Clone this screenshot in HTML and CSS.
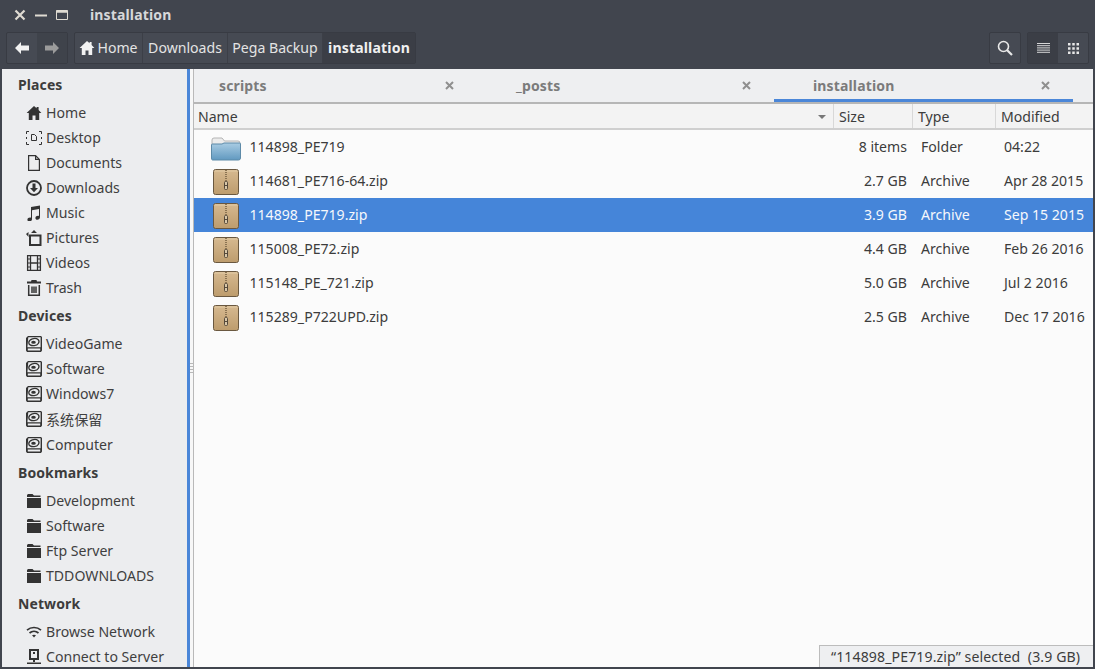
FILE: index.html
```html
<!DOCTYPE html>
<html lang="en">
<head>
<meta charset="utf-8">
<title>installation</title>
<link rel="stylesheet" href="styles.css">
</head>
<body>
<svg class="sprite" width="0" height="0" aria-hidden="true">
  <symbol id="i-home" viewBox="0 0 16 16"><path fill="currentColor" d="M8 1 .6 8h2.200v7h3.700v-4.600h3V15h3.700V8h2.200L12.600 5V2h-2v1.200z"/></symbol>
  <symbol id="i-desktop" viewBox="0 0 16 16"><path fill="none" stroke="currentColor" d="M.5 4V1.500H3M13 1.500h2.500V4M15.500 12v2.500H13M3 14.500H.5V12M.5 7v2M15.500 7v2"/><path fill="none" stroke="currentColor" d="M5.500 4.500h3l2 2v4h-5z"/></symbol>
  <symbol id="i-doc" viewBox="0 0 16 16"><path fill="none" stroke="currentColor" stroke-width="1.200" d="M2.600.6h7l3.800 3.800v11H2.600zM9.600.6v3.800h3.800"/></symbol>
  <symbol id="i-down" viewBox="0 0 16 16"><circle cx="8" cy="8" r="7" fill="none" stroke="currentColor" stroke-width="1.800"/><path fill="currentColor" d="M6.500 3.500h3V8h2.500L8 12.300 4 8h2.500z"/></symbol>
  <symbol id="i-music" viewBox="0 0 16 16"><path fill="currentColor" d="M14 .5v11.800c0 1.500-1.300 2.400-2.600 2.400s-2-.8-2-1.800c0-1.300 1.300-2.200 2.600-2.200.4 0 .7.100 1 .2V4L6 5.200v9c0 1.400-1.300 2.300-2.600 2.300s-2-.8-2-1.800c0-1.300 1.300-2.200 2.600-2.200.4 0 .7.100 1 .2V2z"/></symbol>
  <symbol id="i-pic" viewBox="0 0 16 16"><path fill="none" stroke="currentColor" stroke-width="2" d="M4 5.500h10.500v9.500H4z"/><path fill="currentColor" d="M8 0l3 3H5zM0 4l2.500-2v5z"/></symbol>
  <symbol id="i-film" viewBox="0 0 16 16"><path fill="none" stroke="currentColor" stroke-width="1.300" d="M1.600.7h12.800v14.600H1.600zM4.500.7v14.600M11.500.7v14.600M4.500 8h7"/><path stroke="currentColor" d="M1.600 4h2.900M1.600 8h2.900M1.600 12h2.900M11.500 4h2.900M11.500 8h2.900M11.500 12h2.900"/></symbol>
  <symbol id="i-trash" viewBox="0 0 16 16"><path fill="currentColor" d="M5.500 0h5l.5 1.500h4V3.500H1V1.500h4z"/><path fill="none" stroke="currentColor" stroke-width="1.500" d="M2.700 5v10.200h10.600V5M6 6.500v6.500M8 6.500v6.500M10 6.500v6.500"/></symbol>
  <symbol id="i-disk" viewBox="0 0 16 16"><path fill="currentColor" fill-rule="evenodd" d="M2 0h13l1 1v13.500l-1 1.500H1l-1-1.500V2zM2.300 1.300 1.400 11.200H14.600V1.300zM1.800 12.600v1.900h12.400v-1.900z"/><path fill="none" stroke="currentColor" stroke-width="1.300" d="M2.800 6.500C3 3.500 9 1 12 3.600c2.200 2 .4 5.800-3.800 6-3.600.2-5.600-1.200-5.400-3.100z"/><ellipse cx="7.500" cy="6.300" rx="2.300" ry="1.500" fill="currentColor"/></symbol>
  <symbol id="i-folder" viewBox="0 0 16 16"><path fill="currentColor" d="M2 1h4.500L8 2.500h6.500V4H1V2zM1 5h14v10H1z"/></symbol>
  <symbol id="i-wifi" viewBox="0 0 16 16"><path fill="none" stroke="currentColor" stroke-width="1.700" d="M1 6.200c4-3.600 10-3.600 14 0M3.500 9c2.600-2.200 6.400-2.200 9 0"/><path fill="currentColor" d="M6 11.300c1.200-.9 2.800-.9 4 0L8 13.500z"/></symbol>
  <symbol id="i-server" viewBox="0 0 16 16"><path fill="currentColor" fill-rule="evenodd" d="M3 0h10v11H3zM5 2v7h6V2zM7 3h2v2H7zM7 11h2v2H7zM1 13.500h14V15H1z"/></symbol>
  <symbol id="i-zip" viewBox="0 0 26 26"><rect x=".5" y=".5" width="25" height="25" rx="2" fill="url(#zipgrad)" stroke="#6a5840"/><path stroke="#f0dfc0" stroke-opacity=".5" fill="none" d="M1.500 2h23"/><path stroke="#8a7352" stroke-width="2" stroke-dasharray="1 1" d="M13 1v12"/><rect x="11.500" y="12.500" width="3" height="8" rx="1" fill="#d8c7a8" stroke="#54483a"/><path stroke="#54483a" d="M11.500 16.500h3"/></symbol>
  <symbol id="i-bigfolder" viewBox="0 0 30 26"><g transform="translate(0 2)"><path fill="#ececec" stroke="#b4b4b4" d="M1 20V3q0-2 2-2h8l2.500 3H27q2 0 2 2v14z"/><path fill="url(#foldgrad)" stroke="#5d8aa8" d="M.5 21V8q0-1 1-1H11l2-1h15.500q1 0 1 1v14q0 2-2 2h-26q-1 0-1-2z"/></g></symbol>
  <defs>
    <linearGradient id="zipgrad" x1="0" y1="0" x2="0" y2="1"><stop offset="0" stop-color="#d6b990"/><stop offset="1" stop-color="#bd9c6d"/></linearGradient>
    <linearGradient id="foldgrad" x1="0" y1="0" x2="0" y2="1"><stop offset="0" stop-color="#a9cce3"/><stop offset="1" stop-color="#6199c0"/></linearGradient>
  </defs>
</svg>

<div class="window">
  <header class="titlebar">
    <div class="wm-buttons">
      <svg class="wm" viewBox="0 0 12 12"><path d="M1.500 1.500l9 9M10.500 1.500l-9 9" stroke="currentColor" stroke-width="2.200" fill="none"/></svg>
      <svg class="wm" viewBox="0 0 12 12"><path d="M0 6.500h12" stroke="currentColor" stroke-width="2" fill="none"/></svg>
      <svg class="wm" viewBox="0 0 12 12"><path d="M.5 1.500h11v9H.5z" stroke="currentColor" fill="none"/><path d="M.5 2.500h11" stroke="currentColor" stroke-width="2.500" fill="none"/></svg>
    </div>
    <span class="title">installation</span>
  </header>

  <div class="toolbar">
    <div class="group nav">
      <button class="tbtn nav-back"><svg class="arrow" viewBox="0 0 14 12"><path fill="currentColor" d="M0 6l6-6v3.500h8v5H6V12z"/></svg></button>
      <button class="tbtn nav-fwd"><svg class="arrow" viewBox="0 0 14 12"><path fill="currentColor" d="M14 6L8 0v3.500H0v5h8V12z"/></svg></button>
    </div>
    <div class="group crumbs">
      <span class="crumb crumb-home"><svg class="crumb-icon"><use href="#i-home"/></svg>Home</span>
      <span class="crumb crumb-dl">Downloads</span>
      <span class="crumb crumb-pega">Pega Backup</span>
      <span class="crumb crumb-current">installation</span>
    </div>
    <div class="spacer"></div>
    <div class="group search">
      <button class="tbtn"><svg class="tool-search" viewBox="0 0 16 16"><circle cx="6.500" cy="6.500" r="5" fill="none" stroke="currentColor" stroke-width="1.600"/><path d="M10 10l5 5" stroke="currentColor" stroke-width="2.200"/></svg></button>
    </div>
    <div class="group views">
      <button class="tbtn view-on"><svg class="tool-list" viewBox="0 0 13 11"><path d="M0 .5h13M0 2.700h13M0 4.900h13M0 7.100h13M0 9.300h13" stroke="currentColor" stroke-width=".9" fill="none"/></svg></button>
      <button class="tbtn"><svg class="tool-grid" viewBox="0 0 11 11"><path fill="currentColor" d="M0 0h2.500v2.500H0zM4.250 0h2.500v2.500h-2.500zM8.500 0H11v2.500H8.500zM0 4.250h2.500v2.500H0zM4.250 4.250h2.500v2.500h-2.500zM8.500 4.250H11v2.500H8.500zM0 8.500h2.500V11H0zM4.250 8.500h2.500V11h-2.500zM8.500 8.500H11V11H8.500z"/></svg></button>
    </div>
  </div>

  <div class="body">
    <nav class="sidebar">
      <h2 class="side-head">Places</h2>
      <a class="side-item"><svg class="side-icon"><use href="#i-home"/></svg>Home</a>
      <a class="side-item"><svg class="side-icon"><use href="#i-desktop"/></svg>Desktop</a>
      <a class="side-item"><svg class="side-icon"><use href="#i-doc"/></svg>Documents</a>
      <a class="side-item"><svg class="side-icon"><use href="#i-down"/></svg>Downloads</a>
      <a class="side-item"><svg class="side-icon"><use href="#i-music"/></svg>Music</a>
      <a class="side-item"><svg class="side-icon"><use href="#i-pic"/></svg>Pictures</a>
      <a class="side-item"><svg class="side-icon"><use href="#i-film"/></svg>Videos</a>
      <a class="side-item"><svg class="side-icon"><use href="#i-trash"/></svg>Trash</a>
      <h2 class="side-head">Devices</h2>
      <a class="side-item"><svg class="side-icon"><use href="#i-disk"/></svg>VideoGame</a>
      <a class="side-item"><svg class="side-icon"><use href="#i-disk"/></svg>Software</a>
      <a class="side-item"><svg class="side-icon"><use href="#i-disk"/></svg>Windows7</a>
      <a class="side-item side-item-cjk"><svg class="side-icon"><use href="#i-disk"/></svg>系统保留</a>
      <a class="side-item"><svg class="side-icon"><use href="#i-disk"/></svg>Computer</a>
      <h2 class="side-head">Bookmarks</h2>
      <a class="side-item"><svg class="side-icon"><use href="#i-folder"/></svg>Development</a>
      <a class="side-item"><svg class="side-icon"><use href="#i-folder"/></svg>Software</a>
      <a class="side-item"><svg class="side-icon"><use href="#i-folder"/></svg>Ftp Server</a>
      <a class="side-item"><svg class="side-icon"><use href="#i-folder"/></svg>TDDOWNLOADS</a>
      <h2 class="side-head">Network</h2>
      <a class="side-item"><svg class="side-icon"><use href="#i-wifi"/></svg>Browse Network</a>
      <a class="side-item"><svg class="side-icon"><use href="#i-server"/></svg>Connect to Server</a>
    </nav>
    <div class="splitter"><span class="grip"></span></div>

    <main class="main">
      <div class="tabs">
        <div class="tab tab-first"><span>scripts</span><svg class="tab-x" viewBox="0 0 9 9"><path d="M1 1l7 7M8 1L1 8" stroke="currentColor" stroke-width="2" fill="none"/></svg></div>
        <div class="tab"><span>_posts</span><svg class="tab-x" viewBox="0 0 9 9"><path d="M1 1l7 7M8 1L1 8" stroke="currentColor" stroke-width="2" fill="none"/></svg></div>
        <div class="tab tab-active"><span>installation</span><svg class="tab-x" viewBox="0 0 9 9"><path d="M1 1l7 7M8 1L1 8" stroke="currentColor" stroke-width="2" fill="none"/></svg></div>
      </div>
      <div class="cols">
        <div class="col col-name">Name<span class="sort"></span></div>
        <div class="col">Size</div>
        <div class="col">Type</div>
        <div class="col col-last">Modified</div>
      </div>
      <div class="rows">
        <div class="row"><svg class="file-icon"><use href="#i-bigfolder"/></svg><span class="c-name">114898_PE719</span><span class="c-size">8 items</span><span class="c-type">Folder</span><span class="c-date">04:22</span></div>
        <div class="row"><svg class="file-icon"><use href="#i-zip"/></svg><span class="c-name">114681_PE716-64.zip</span><span class="c-size">2.7 GB</span><span class="c-type">Archive</span><span class="c-date">Apr 28 2015</span></div>
        <div class="row row-selected"><svg class="file-icon"><use href="#i-zip"/></svg><span class="c-name">114898_PE719.zip</span><span class="c-size">3.9 GB</span><span class="c-type">Archive</span><span class="c-date">Sep 15 2015</span></div>
        <div class="row"><svg class="file-icon"><use href="#i-zip"/></svg><span class="c-name">115008_PE72.zip</span><span class="c-size">4.4 GB</span><span class="c-type">Archive</span><span class="c-date">Feb 26 2016</span></div>
        <div class="row"><svg class="file-icon"><use href="#i-zip"/></svg><span class="c-name">115148_PE_721.zip</span><span class="c-size">5.0 GB</span><span class="c-type">Archive</span><span class="c-date">Jul 2 2016</span></div>
        <div class="row"><svg class="file-icon"><use href="#i-zip"/></svg><span class="c-name">115289_P722UPD.zip</span><span class="c-size">2.5 GB</span><span class="c-type">Archive</span><span class="c-date">Dec 17 2016</span></div>
      </div>
      <div class="status">“114898_PE719.zip” selected&nbsp; (3.9 GB)</div>
    </main>
  </div>
</div>
</body>
</html>
```
FILE: styles.css
```css
* { box-sizing: border-box; }
html, body { margin: 0; height: 100%; overflow: hidden; }
body {
  font-family: "Noto Sans", "Noto Sans CJK SC", sans-serif;
  font-size: 14.1px;
  color: #3c3c3c;
  background: #41454e;
}
.sprite { position: absolute; }
.window { display: flex; flex-direction: column; width: 1095px; height: 669px; background: #41454e; }

.titlebar { height: 30px; padding-bottom: 1px; display: flex; align-items: center; flex: none; color: #dfdbd2; }
.wm-buttons { display: flex; gap: 9px; padding-left: 14px; width: 90px; }
.wm { width: 12px; height: 12px; }
.title { font-weight: 700; font-size: 14px; letter-spacing: .15px; color: #d7d8da; }

.toolbar { height: 39px; flex: none; display: flex; gap: 6px; padding: 2px 6px 5px 6px; color: #e8e8e8; }
.group { display: flex; height: 32px; background: #464a53; border: 1px solid #383b43; border-radius: 2px; }
.tbtn { background: transparent; border: 0; padding: 0; display: flex; align-items: center; justify-content: center; color: inherit; }
.nav { width: 62px; }
.nav-back { width: 30px; color: #f2f2f2; }
.nav-fwd { flex: 1; background: #3f434b; color: #9b9b9b; }
.arrow { width: 14px; height: 12px; }
.crumbs { width: 342px; }
.crumb { display: flex; align-items: center; justify-content: center; padding-bottom: 2px; border-right: 1px solid #3c3f47; color: #e4e4e4; }
.crumb-home { width: 68px; }
.crumb-dl { width: 85px; }
.crumb-pega { width: 95px; }
.crumb-current { flex: 1; border-right: 0; background: #3b3e46; font-weight: 700; letter-spacing: .15px; color: #f0f0f0; }
.crumb-icon { width: 16px; height: 16px; margin: 2px 2px 0 0; color: #f2f2f2; }
.spacer { flex: 1; }
.search { width: 32px; }
.search .tbtn { width: 100%; }
.views { width: 62px; }
.views .tbtn { flex: 1; }
.view-on { background: #3b3e46; }
.tool-search { width: 16px; height: 16px; }
.tool-list { width: 13px; height: 11px; }
.tool-grid { width: 11px; height: 11px; }

.body { flex: 1; min-height: 0; display: flex; padding: 0 2px 2px; }
.sidebar { width: 185px; flex: none; overflow: hidden; background: #ecedef; padding-left: 16px; color: #3d3d3d; }
.side-head { margin: 0 0 1px; height: 30px; display: flex; align-items: center; font-size: 14px; font-weight: 700; letter-spacing: .1px; color: #3c3c3c; }
.side-item { height: 25px; display: flex; align-items: center; gap: 4px; padding-left: 8px; color: #3f3f3f; }
.side-item-cjk { height: 26px; }
.side-icon { width: 16px; height: 16px; flex: none; color: #333; }

.splitter { width: 7px; flex: none; background: #f7f7f7; border-left: 3px solid #4a86d8; border-right: 1px solid #b9b9b9; position: relative; }
.grip { position: absolute; left: 0; top: 294px; width: 3px; height: 10px; background: repeating-linear-gradient(#b8b8b8 0 1px, transparent 1px 3px); }

.main { flex: 1; min-width: 0; display: flex; flex-direction: column; background: #fbfbfb; position: relative; }
.tabs { height: 35px; flex: none; display: grid; grid-template-columns: 283px 297px 299px 1fr; background: #eeeff1; border-bottom: 2px solid #b6b6b6; }
.tab { display: flex; align-items: center; justify-content: space-between; padding: 0 23px 1px 39px; font-size: 14px; font-weight: 700; letter-spacing: .15px; color: #7b7b7b; }
.tab-first { padding-left: 25px; }
.tab-active { box-shadow: inset 0 -3px 0 #4a86d8; }
.tab-x { width: 9px; height: 9px; color: #8f8f8f; }

.cols { height: 26px; flex: none; display: grid; grid-template-columns: 640px 79px 83px 1fr; background: #f3f3f3; border-bottom: 2px solid #cfcfcf; color: #3c3c3c; }
.col { display: flex; align-items: center; padding-left: 5px; padding-top: 1px; border-right: 1px solid #d8d8d8; position: relative; }
.col-name { padding-left: 4px; }
.col-last { border-right: 0; }
.sort { position: absolute; right: 7px; top: 11px; border: 4px solid transparent; border-top-color: #777; border-bottom: 0; }

.rows { flex: 1; }
.row { height: 34px; display: grid; grid-template-columns: 55.5px 584.5px 73px 96px 1fr; align-items: center; color: #3c3c3c; }
.row span { padding-bottom: 2px; }
.row-selected { background: #4585d9; color: #f5f8fc; }
.file-icon { width: 30px; height: 26px; margin: 2px 0 0 17px; }
.c-size { text-align: right; }
.c-type { padding-left: 14px; }
.c-date { padding-left: 1px; white-space: nowrap; }

.status { position: absolute; right: 0; bottom: 0; width: 274px; height: 22px; display: flex; align-items: center; padding-left: 11px; background: #eeeff1; border: 1px solid #bcbcbc; border-width: 1px 0 0 1px; letter-spacing: .11px; color: #3c3c3c; white-space: nowrap; }
```
